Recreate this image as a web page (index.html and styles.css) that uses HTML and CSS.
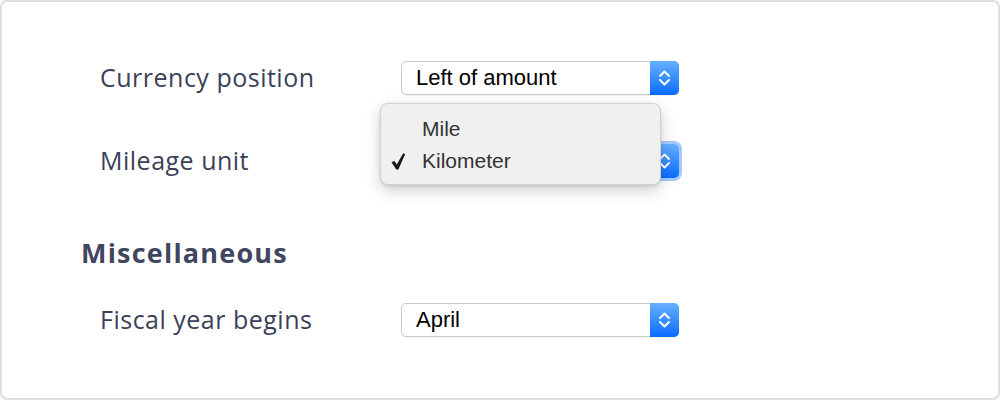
FILE: index.html
```html
<!DOCTYPE html>
<html>
<head>
<meta charset="utf-8">
<link rel="stylesheet" href="styles.css">
</head>
<body>
<div class="frame">
  <div class="row">
    <div class="label">Currency position</div>
    <div class="select">
      <span class="value">Left of amount</span>
      <span class="stepper"><svg width="29" height="34" viewBox="0 0 29 34"><path d="M10 15 L14.5 10.5 L19 15 M10 19 L14.5 23.5 L19 19" fill="none" stroke="#fff" stroke-width="2" stroke-linecap="round" stroke-linejoin="round"/></svg></span>
    </div>
  </div>
  <div class="row row-2">
    <div class="label">Mileage unit</div>
    <div class="select focused">
      <span class="value"></span>
      <span class="stepper"><svg width="29" height="34" viewBox="0 0 29 34"><path d="M10 15 L14.5 10.5 L19 15 M10 19 L14.5 23.5 L19 19" fill="none" stroke="#fff" stroke-width="2" stroke-linecap="round" stroke-linejoin="round"/></svg></span>
      <div class="menu">
        <div class="item"><span class="check"></span>Mile</div>
        <div class="item"><span class="check"><svg width="15" height="17" viewBox="0 0 15 17"><path d="M0.5 9.2 L3.4 7.9 L5.8 11.6 L12.2 0.3 L14.2 1 L7.4 16.5 L5.2 16.5 Z" fill="#1a1a1a"/></svg></span>Kilometer</div>
      </div>
    </div>
  </div>
  <h2 class="heading">Miscellaneous</h2>
  <div class="row row-3">
    <div class="label">Fiscal year begins</div>
    <div class="select">
      <span class="value">April</span>
      <span class="stepper"><svg width="29" height="34" viewBox="0 0 29 34"><path d="M10 15 L14.5 10.5 L19 15 M10 19 L14.5 23.5 L19 19" fill="none" stroke="#fff" stroke-width="2" stroke-linecap="round" stroke-linejoin="round"/></svg></span>
    </div>
  </div>
</div>
</body>
</html>
```

FILE: styles.css
```css
html, body {
  margin: 0;
  padding: 0;
  background: #ffffff;
}

.frame {
  box-sizing: border-box;
  width: 1000px;
  height: 400px;
  border: 2px solid #dfdfdf;
  border-radius: 7px;
  background: #ffffff;
  padding: 59px 0 0 0;
  font-family: "Open Sans", Lato, sans-serif;
}

.row {
  display: flex;
  align-items: center;
  height: 34px;
  padding-left: 98px;
}

.row-2 {
  margin-top: 49px;
}

.row-3 {
  margin-top: 33px;
}

.label {
  width: 301px;
  font-size: 25px;
  letter-spacing: 0.5px;
  line-height: 30px;
  margin-top: -2px;
  color: #3b3f57;
}

.select {
  position: relative;
  box-sizing: border-box;
  width: 278px;
  height: 34px;
  display: flex;
  align-items: stretch;
  border: 1px solid #cacaca;
  border-radius: 5px;
  background: #ffffff;
  box-shadow: 0 1px 1px rgba(0, 0, 0, 0.06);
}

.value {
  flex: 1;
  display: flex;
  align-items: center;
  padding-left: 14px;
  font-family: "Liberation Sans", Arial, sans-serif;
  font-size: 22px;
  color: #000000;
}

.stepper {
  width: 29px;
  margin: -1px -1px -1px 0;
  border-radius: 0 5px 5px 0;
  background: linear-gradient(#66b0ff, #0a6cff);
  display: flex;
  align-items: center;
  justify-content: center;
}

.stepper svg {
  display: block;
}

.focused {
  box-shadow: 0 0 0 3px rgba(88, 160, 255, 0.55);
}

.menu {
  position: absolute;
  left: -22px;
  top: -42px;
  box-sizing: border-box;
  width: 281px;
  height: 82px;
  padding: 9px 0 8px 0;
  background: #f0f0f0;
  border: 1px solid #d2d2d2;
  border-radius: 8px;
  box-shadow: 0 6px 16px rgba(0, 0, 0, 0.18), 0 1px 3px rgba(0, 0, 0, 0.12);
  font-family: "Liberation Sans", Arial, sans-serif;
  font-size: 21px;
  color: #333333;
}

.item {
  display: flex;
  align-items: center;
  height: 32px;
}

.check {
  width: 41px;
  padding-left: 10px;
  box-sizing: border-box;
  display: flex;
  align-items: center;
}

.check svg {
  display: block;
}

.heading {
  margin: 58px 0 0 79px;
  height: 34px;
  line-height: 34px;
  font-size: 27px;
  letter-spacing: 1.2px;
  font-weight: 700;
  color: #40465f;
}
```
